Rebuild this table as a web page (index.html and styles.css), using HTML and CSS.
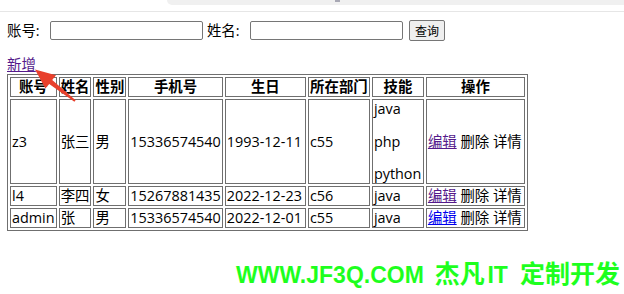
FILE: index.html
```html
<!DOCTYPE html>
<html>
<head>
<meta charset="utf-8">
<title>用户列表</title>
<link rel="stylesheet" href="styles.css">
</head>
<body>
<div class="chrome"><div class="tabbar"><span class="mark"></span></div></div>
<div class="page">
  <form class="search">
    <label class="lbl">账号:</label><input class="field" type="text">
    <label class="lbl lbl2">姓名:</label><input class="field" type="text">
    <button class="btn" type="button">查询</button>
  </form>
  <div class="addrow"><a class="link visited" href="#add">新增</a></div>
  <table class="grid">
    <tr>
      <th class="w1">账号</th><th class="w2">姓名</th><th class="w3">性别</th><th class="w4">手机号</th>
      <th class="w5">生日</th><th class="w6">所在部门</th><th class="w7">技能</th><th class="w8">操作</th>
    </tr>
    <tr>
      <td>z3</td><td>张三</td><td>男</td><td>15336574540</td><td>1993-12-11</td><td>c55</td>
      <td><div class="skills"><span>java</span><span>php</span><span>python</span></div></td>
      <td><a class="link visited" href="#e1">编辑</a> 删除 详情</td>
    </tr>
    <tr>
      <td>l4</td><td>李四</td><td>女</td><td>15267881435</td><td>2022-12-23</td><td>c56</td>
      <td>java</td>
      <td><a class="link visited" href="#e2">编辑</a> 删除 详情</td>
    </tr>
    <tr>
      <td>admin</td><td>张</td><td>男</td><td>15336574540</td><td>2022-12-01</td><td>c55</td>
      <td>java</td>
      <td><a class="link" href="#e3">编辑</a> 删除 详情</td>
    </tr>
  </table>
</div>
<svg class="arrow" width="100" height="110" viewBox="0 0 100 110">
  <polygon points="35,69.5 56,75.2 52.2,79.9 75.6,100.2 74.4,101.8 49.2,83.9 45.4,88.6" fill="#e8402c"/>
</svg>
<div class="watermark"><span class="lat">WWW.JF3Q.COM</span> <span class="cjk c1">杰凡</span><span class="lat it">IT</span> <span class="cjk c2">定制开发</span></div>
</body>
</html>
```

FILE: styles.css
```css
html, body {
  margin: 0;
  padding: 0;
  background: #ffffff;
}
body {
  position: relative;
  width: 624px;
  height: 294px;
  overflow: hidden;
  font-family: "Open Sans", "Noto Sans CJK SC", sans-serif;
  font-size: 14.4px;
  color: #000000;
}
.chrome {
  height: 11px;
  border-bottom: 1px solid #e6e6e6;
  display: flex;
  justify-content: flex-end;
}
.tabbar {
  width: 457px;
  height: 5px;
  background: #f0f0f0;
  border-bottom-left-radius: 5px;
  display: flex;
}
.mark {
  width: 5px;
  height: 2px;
  margin-left: 168px;
  background: #a8a8b4;
}
.page {
  padding-left: 7px;
  line-height: 16px;
}
.search {
  display: flex;
  align-items: center;
  height: 21px;
  margin: 8px 0 0 0;
}
.lbl {
  margin-right: 10.4px;
  line-height: 16px;
}
.lbl2 {
  margin-left: 4px;
}
.field {
  box-sizing: border-box;
  width: 153px;
  height: 19.5px;
  margin: 0;
  padding: 0 2px;
  border: 1px solid #767676;
  border-radius: 2px;
  background: #ffffff;
}
.btn {
  box-sizing: border-box;
  width: 36px;
  height: 21px;
  margin: 0 0 0 6px;
  padding: 0;
  border: 1px solid #767676;
  border-radius: 2px;
  background: #efefef;
  font-family: "Open Sans", "Noto Sans CJK SC", sans-serif;
  font-size: 12px;
  color: #000000;
}
.addrow {
  height: 16px;
  line-height: 16px;
  margin-top: 16px;
}
.link {
  color: #0000ee;
  text-decoration: underline;
}
.link.visited {
  color: #551a8b;
}
.grid {
  margin-top: 1px;
  border: 1px solid #6f6f6f;
  border-collapse: separate;
  border-spacing: 2px;
}
.grid th,
.grid td {
  border: 1px solid #6f6f6f;
  padding: 1px;
  line-height: 16px;
  text-align: left;
  white-space: nowrap;
}
.grid th {
  font-weight: bold;
  text-align: center;
}
.w1 { width: 42.7px; }
.w2 { width: 28px; }
.w3 { width: 28px; }
.w4 { width: 90px; }
.w5 { width: 77.1px; }
.w6 { width: 58px; }
.w7 { width: 48px; }
.w8 { width: 95px; }
.skills {
  display: flex;
  flex-direction: column;
  gap: 16.7px;
}
.arrow {
  position: absolute;
  left: 0;
  top: 0;
  pointer-events: none;
}
.watermark {
  position: absolute;
  left: 236px;
  top: 257px;
  line-height: 30px;
  font-family: "Liberation Sans", "Noto Sans CJK SC", sans-serif;
  font-size: 23px;
  font-weight: bold;
  color: #1eff1e;
  white-space: nowrap;
}
.cjk {
  font-family: "Noto Sans CJK SC", sans-serif;
  font-size: 25px;
}
.c1 { margin-left: 4.5px; }
.it { margin-left: 2.7px; }
.c2 { margin-left: 5.7px; }
```
